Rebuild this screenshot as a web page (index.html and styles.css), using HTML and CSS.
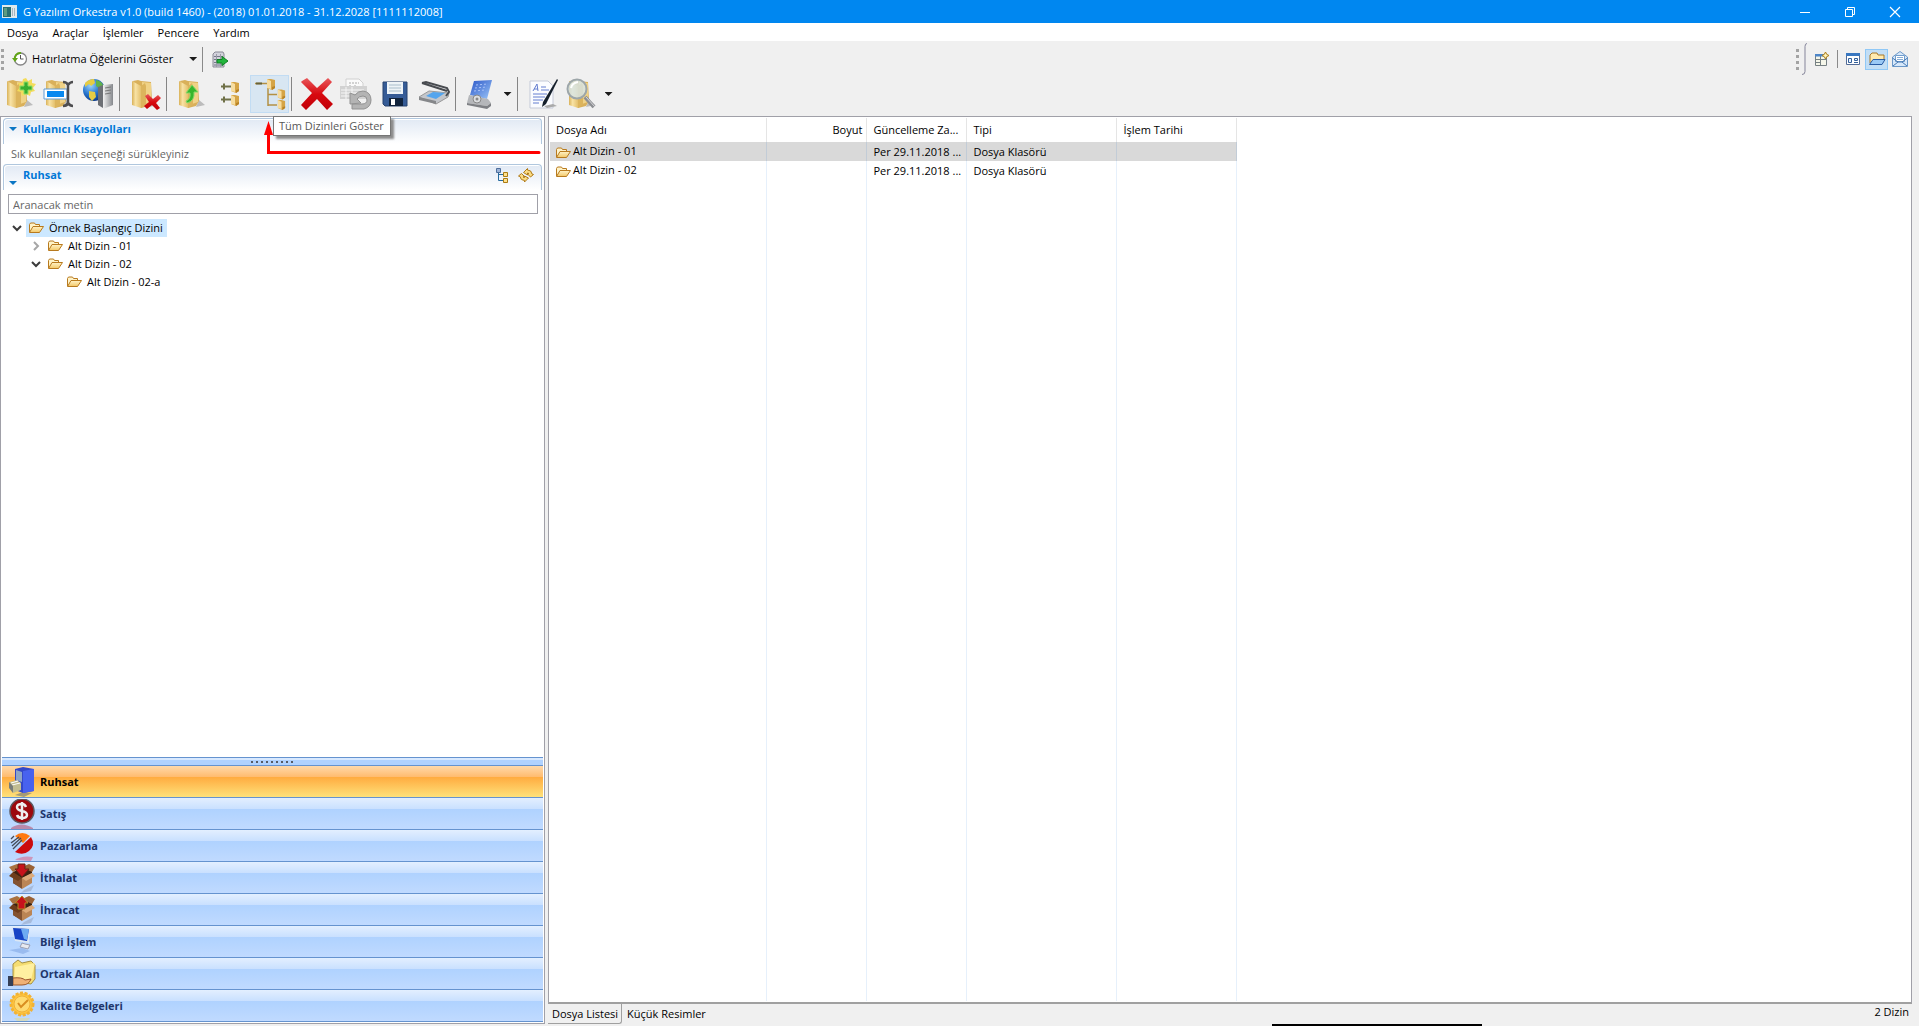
FILE: index.html
```html
<!DOCTYPE html>
<html lang="tr">
<head>
<meta charset="utf-8">
<title>G Yazılım Orkestra</title>
<link rel="stylesheet" href="styles.css">
</head>
<body>
<svg class="defs" aria-hidden="true">
  <defs>
    <linearGradient id="gFolder" x1="0" y1="0" x2="1" y2="0"><stop offset="0" stop-color="#d9b25a"/><stop offset=".4" stop-color="#f8e2a4"/><stop offset="1" stop-color="#e4c06c"/></linearGradient>
    <linearGradient id="gRed" x1="0" y1="0" x2="0" y2="1"><stop offset="0" stop-color="#e8585b"/><stop offset=".5" stop-color="#d80a10"/><stop offset="1" stop-color="#c00008"/></linearGradient>
    <linearGradient id="gBlue" x1="0" y1="0" x2="1" y2="1"><stop offset="0" stop-color="#2b57c8"/><stop offset="1" stop-color="#9cc6f8"/></linearGradient>
    <linearGradient id="gGrey" x1="0" y1="0" x2="1" y2="0"><stop offset="0" stop-color="#f2f2f2"/><stop offset="1" stop-color="#85888c"/></linearGradient>
    <linearGradient id="gSmall" x1="0" y1="0" x2="0" y2="1"><stop offset="0" stop-color="#fff3c8"/><stop offset="1" stop-color="#f3c867"/></linearGradient>
    <radialGradient id="gGlobe" cx=".35" cy=".3" r=".8"><stop offset="0" stop-color="#9ed4f8"/><stop offset=".5" stop-color="#2a78d0"/><stop offset="1" stop-color="#062c78"/></radialGradient>
    <symbol id="folder" viewBox="0 0 16 14">
      <path d="M1.500 11V3.500l1-1.500h4l1 1.500h4v2" fill="#fff3c8" stroke="#b87a1e"/>
      <path d="M1.500 11.500 5 5.500h10.500l-4 6z" fill="url(#gSmall)" stroke="#b87a1e"/>
    </symbol>
    <symbol id="bigfolder" viewBox="0 0 32 32">
      <path d="M20 29l9-2-6-5z" fill="#a5a5a5" opacity=".7"/>
      <path d="M4 3l5-1 3 1 10 1 1 19-3 5-8 2z" fill="#d9b05a"/>
      <path d="M13 4l9 1v19l-9 3z" fill="#f0d286"/>
      <path d="M3 3l9 5v22l-9-3z" fill="url(#gFolder)"/>
      <path d="M12 8l4-3 1 3v19l-5 3z" fill="#dcb45c"/>
    </symbol>
    <symbol id="minifolder" viewBox="0 0 10 12">
      <path d="M1 1h4l4 1v8L6 12 1 10z" fill="#d5a446"/><path d="M1 1l4 2v8l-4-1z" fill="#f7dda0"/><path d="M6 9l3-1v2l-3 2z" fill="#b98325"/>
    </symbol>
    <symbol id="box" viewBox="0 0 28 30">
      <path d="M16 27l10-5-3 6-10 2z" fill="#8c97b0" opacity=".45"/>
      <path d="M5 9l9-4 10 3v11l-10 6-9-5z" fill="#3c2212"/>
      <path d="M5 10l9 5v11l-9-6z" fill="#845331"/><path d="M14 15l10-5v10l-10 6z" fill="#bb8555"/>
      <path d="M5 9L1 4l8-3 5 3z" fill="#a9713f"/><path d="M14 4l7-3 6 3-3 5z" fill="#9a6236"/>
      <path d="M14 15l10-5 3 3-9 5z" fill="#dcaa7a"/><path d="M5 9l9 6-4 3-9-5z" fill="#6d3d1c"/>
    </symbol>
  </defs>
</svg>

<header class="titlebar">
  <svg width="15" height="13" viewBox="0 0 15 13"><path d="M0 0h15v13H0z" fill="#dfe9ec"/><path d="M1 2h8v10H1z" fill="#286f72"/><path d="M2 3h3v8H2z" fill="#5b9b83"/><path d="M10 3h1v8h-1zM12 3h1v8h-1z" fill="#a9b5bf"/></svg>
  <h1>G Yazılım Orkestra v1.0 (build 1460) - (2018) 01.01.2018 - 31.12.2028 [1111112008]</h1>
  <div class="window-buttons">
    <button aria-label="Simge durumuna küçült"><svg width="12" height="12"><path d="M1 6.500h10" stroke="#fff"/></svg></button>
    <button aria-label="Önceki boyut"><svg width="12" height="12"><path d="M1.500 3.500h7v7h-7zM3.500 3.500v-2h7v7h-2" fill="none" stroke="#fff"/></svg></button>
    <button aria-label="Kapat"><svg width="12" height="12"><path d="M1 1l10 10M11 1L1 11" stroke="#fff" stroke-width="1.200"/></svg></button>
  </div>
</header>
<nav class="menubar">
  <button>Dosya</button><button>Araçlar</button><button>İşlemler</button><button>Pencere</button><button>Yardım</button>
</nav>

<div class="toolbars">
  <div class="toolbar-top">
    <span class="grip"></span>
    <button class="reminder">
      <svg width="16" height="16" viewBox="0 0 16 16"><circle cx="8.500" cy="8" r="6" fill="#fff" stroke="#868686" stroke-width="1.300"/><path d="M8.500 4v4h3" fill="none" stroke="#555"/><path d="M3 9a5.500 5.500 0 0 1 6-7" fill="none" stroke="#61a516" stroke-width="2"/><path d="M0 7h6L3 11z" fill="#61a516"/></svg>
      Hatırlatma Öğelerini Göster
      <span class="caret"></span>
    </button>
    <span class="rule"></span>
    <button class="small-tool" aria-label="Çıkış"><svg width="17" height="17" viewBox="0 0 17 17"><path d="M3 1h8l1 2v13H1V3z" fill="#d3d3dc" stroke="#8a8a96"/><path d="M2 5.500h9M2 8.500h9M2 11.500h9M2 14h9" stroke="#77778a"/><path d="M4.500 3v13M8.500 3v13" stroke="#9a9aa8"/><path d="M5 8.500h5V5.500L16 10l-6 4.500V12H5z" fill="#22b53c" stroke="#118024"/></svg></button>
    <div class="perspectives">
      <span class="grip"></span>
      <svg class="curve" width="6" height="32" viewBox="0 0 6 32"><path d="M5 .500q-2 0-2 3v25q0 3-3 3" fill="none" stroke="#85859a"/></svg>
      <button aria-label="Perspektif aç"><svg width="16" height="16" viewBox="0 0 16 16"><path d="M1.500 3.500h11v11h-11zM1.500 8.500h11M6.500 5v9M1.500 11.500h5" fill="#f5f6e9" stroke="#768083"/><path d="M1 3h9v2.500H1z" fill="#4c85c8"/><path d="M11.500 1l1.200 2.300L15 4.500l-2.300 1.200L11.500 8l-1.200-2.300L8 4.500l2.300-1.200z" fill="#fff2b8" stroke="#ae7d18"/></svg></button>
      <span class="rule"></span>
      <button aria-label="Genel perspektif"><svg width="16" height="16" viewBox="0 0 16 16"><path d="M1.500 2.500h13v11h-13z" fill="#fff" stroke="#526b96"/><path d="M1 2h14v3H1z" fill="#3977c0"/><path d="M3.500 7.500h3v4h-3zM9.500 7.500h3v2h-3z" fill="#eaf3ff" stroke="#33609a"/><path d="M9 11.500h4" stroke="#33609a"/></svg></button>
      <button class="active" aria-label="Dosyalar"><svg width="18" height="16" viewBox="0 0 18 16"><path d="M2 12V4l2-2h5l1 2h6v4" fill="#ffeaae" stroke="#a97828"/><path d="M1.500 13.500 5 8.500h12l-3 5z" fill="#9ac9f5" stroke="#285ba3"/></svg></button>
      <button aria-label="Posta"><svg width="18" height="18" viewBox="0 0 18 18"><path d="M1.500 7 9 1.500 16.500 7v9.500h-15z" fill="#d7e8fa" stroke="#6b98c9"/><path d="M4.500 5.500h9v6h-9z" fill="#fff" stroke="#719dcc"/><path d="M6 7.500h6M6 9.500h6" stroke="#88add5"/><path d="M1.500 8 7 12h4l5.500-4M2 16l5-4M16 16l-5-4" fill="none" stroke="#4779b3"/></svg></button>
    </div>
  </div>

  <div class="toolbar-main">
    <button class="tool" aria-label="Yeni dizin"><svg viewBox="0 0 32 32"><use href="#bigfolder"/><path d="M22 0l2 3 4-2v4l4 1-3 4 2 3-4 1-1 4-4-2-4 2-1-4-4-1 3-4-2-4 4 0 1-4z" fill="#f4dc5b"/><path d="M20 4h4v4h4v4h-4v4h-4v-4h-4V8h4z" fill="#39ae30" stroke="#8fdc66"/></svg></button>
    <button class="tool" aria-label="Yeniden adlandır"><svg viewBox="0 0 32 32"><use href="#bigfolder"/><path d="M1 11h23v10H1z" fill="#fff" stroke="#619bd5"/><path d="M4 13h17v6H4z" fill="#0788ef"/><path d="M20 4q4 0 5 3 2-3 5-3M25 7v19M20 28q4 0 5-3 2 3 5 3" fill="none" stroke="#4e4e50" stroke-width="2.500"/></svg></button>
    <button class="tool" aria-label="Sunucu"><svg viewBox="0 0 32 32"><circle cx="12" cy="12" r="11" fill="url(#gGlobe)"/><path d="M3 5q4-4 9-4l1 4-4 3-2-2-4 3zM7 13l6 1 1 5-4 4-3-4z" fill="#e6cc43"/><path d="M14 2q6 1 8 7l-4 2-4-3z" fill="#61b34b"/><path d="M16 9l5-2v23l-5-3z" fill="#6d7075"/><path d="M21 7l10-1v21l-10 4z" fill="url(#gGrey)"/><path d="M23 10l6-1M23 13l6-1M23 16l6-1" stroke="#777"/></svg></button>
    <span class="sep"></span>
    <button class="tool" aria-label="Dizini sil"><svg viewBox="0 0 32 32"><use href="#bigfolder"/><path d="M16 18l3-2 5 5 5-4 3 3-5 5 4 5-3 2-5-5-5 4-3-3 5-4z" fill="url(#gRed)"/></svg></button>
    <span class="sep"></span>
    <button class="tool" aria-label="Üst dizin"><svg viewBox="0 0 32 32"><use href="#bigfolder"/><path d="M11 25q8-2 7-11h4L16 7l-6 8h4q1 6-4 8z" fill="#37b62d" stroke="#86d968"/></svg></button>
    <button class="tool" aria-label="Dizinleri daralt"><svg viewBox="0 0 32 32"><path d="M6 8.500h11M6 21.500h11M9 5.500v6M9 18.500v6" stroke="#6f7047" stroke-width="2"/><use href="#minifolder" x="15" y="3" width="10" height="12"/><use href="#minifolder" x="15" y="16" width="10" height="12"/></svg></button>
    <div class="tool-wrap">
      <button class="tool hot" aria-label="Tüm Dizinleri Göster" aria-describedby="tip"><svg viewBox="0 0 32 32"><path d="M1 5.500h14M14 6v22M14 16.500h9M14 27h9" fill="none" stroke="#b39145" stroke-width="1.500"/><path d="M2 5.500h6" stroke="#666238" stroke-width="2"/><use href="#minifolder" x="12" y="0" width="10" height="12"/><use href="#minifolder" x="23" y="10" width="9" height="12"/><use href="#minifolder" x="23" y="21" width="9" height="11"/></svg></button>
      <svg class="arrow" viewBox="0 0 280 36"><path d="M5.500 12v19.500H276" fill="none" stroke="#f00" stroke-width="3" stroke-linecap="round"/><path d="M5.500 0 10 14H1z" fill="#f00"/></svg>
      <span class="tooltip" id="tip" role="tooltip">Tüm Dizinleri Göster</span>
    </div>
    <span class="sep"></span>
    <button class="tool" aria-label="Sil"><svg viewBox="0 0 32 32"><path d="M1 3l5-3 10 10L27 0l4 4-10 11 11 11-6 6-10-11L5 32l-5-5 11-12L0 4z" fill="url(#gRed)"/></svg></button>
    <button class="tool" aria-label="Geri al"><svg viewBox="0 0 32 32"><path d="M6 1h13l4 4v8H6z" fill="#fafafa" stroke="#d0d0d0"/><path d="M9 5h10M9 8h3m2 0h3" stroke="#aaa" stroke-dasharray="2 1"/><path d="M0 8h27v13H0z" fill="#d2d2d2"/><path d="M1 12h23M1 15h20M1 18h18M6 9v12M12 9v12" stroke="#f6f6f6"/><path d="M12 31h12q7-2 7-9 0-8-8-9-5 0-8 4l-5-2v11l11-1-4-4q2-3 6-3 4 0 4 4 0 4-5 4H12z" fill="#b4b4b4" stroke="#929292"/></svg></button>
    <button class="tool" aria-label="Kaydet"><svg viewBox="0 0 32 32"><path d="M4 4h24v24H6l-2-2z" fill="#355b96" stroke="#27436e"/><path d="M8 4h16v12H8z" fill="#edf3f7"/><path d="M10 7h12M10 10h12M10 13h12" stroke="#a9bdcb"/><path d="M10 20h14v8H10z" fill="#10233c"/><path d="M12 21h4v6h-4z" fill="#fff"/></svg></button>
    <button class="tool" aria-label="Tara"><svg viewBox="0 0 32 32"><path d="M1 19l10-6 20 2-1 4-12 7z" fill="#c3c6cb" stroke="#999"/><path d="M8 18l7-4 12 1-9 6z" fill="#54a5ee"/><path d="M1 19l17 4v3L1 22z" fill="#85878a"/><path d="M4 5l25 8M4 5l4-1 21 6 2 4-3 4" fill="none" stroke="#484b50" stroke-width="2"/></svg></button>
    <span class="sep"></span>
    <button class="tool" aria-label="Aygıt"><svg viewBox="0 0 32 32"><path d="M9 3l18-1-5 19-17-4z" fill="url(#gBlue)"/><path d="M11 7l12-1M10 10l12-1M9 13l11-1" stroke="#a8c2f8" stroke-dasharray="2 2"/><path d="M4 17l19 4 3 4-4 3-20-3z" fill="#b5b7ba"/><path d="M2 25l20 3 4-3v3l-4 3-20-4z" fill="#7e8084"/><circle cx="12" cy="21" r="4" fill="#dcdee0" stroke="#888"/><circle cx="12" cy="21" r="1.500" fill="#888"/></svg></button>
    <button class="drop" aria-label="Aygıt seçenekleri"><span class="caret"></span></button>
    <span class="sep"></span>
    <button class="tool" aria-label="Belge düzenle"><svg viewBox="0 0 32 32"><path d="M3 3h18l5 5v22H3z" fill="#fbfcff" stroke="#c5cad8"/><path d="M6 13l4-7 1 7M7 11h4M14 9h5M14 12h8M6 16h14M6 19h12M6 22h10M6 25h6" fill="none" stroke="#647ed0"/><path d="M17 28l9-2 4 2-10 2z" fill="#aaa"/><path d="M30 1l1 1-12 24-4 3 1-5z" fill="#16202c"/></svg></button>
    <button class="tool" aria-label="Ara"><svg viewBox="0 0 32 32"><use href="#bigfolder"/><path d="M19 19l9 10" stroke="#8d8f93" stroke-width="4"/><path d="M20 19l9 10" stroke="#d9d9db"/><circle cx="11" cy="11" r="9.500" fill="#d7e6ea" fill-opacity=".8" stroke="#9da6a9" stroke-width="2"/><path d="M5 10q1-5 7-6" fill="none" stroke="#fff" stroke-width="2"/></svg></button>
    <button class="drop" aria-label="Arama seçenekleri"><span class="caret"></span></button>
  </div>
</div>

<main class="workspace">
  <aside class="sidebar">
    <section class="section">
      <div class="section-head"><span class="twisty"></span><h2>Kullanıcı Kısayolları</h2></div>
      <p class="hint">Sık kullanılan seçeneği sürükleyiniz</p>
    </section>
    <section class="section grow">
      <div class="section-head">
        <span class="twisty low"></span><h2>Ruhsat</h2>
        <div class="section-tools">
          <button aria-label="Ağaç görünümü"><svg width="14" height="16" viewBox="0 0 14 16"><path d="M3.500 5v8.500H8M3.500 7.500H8" fill="none" stroke="#276b9e"/><path d="M1.500 1.500h4v4h-4z" fill="#9cb3d6" stroke="#4e6f9c"/><path d="M8.500 5.500h4v4h-4zM8.500 11.500h4v4h-4z" fill="#ffe18d" stroke="#ab7b12"/></svg></button>
          <button aria-label="Yenile"><svg width="16" height="16" viewBox="0 0 16 16"><path d="M5.500 5.500l4-4V3q4 0 4.500 4l1.500.500-3 2.500-3-3L11 6.500 9.500 6v2z" fill="#f9dc84" stroke="#b07a17"/><path d="M10.500 11l-4 4v-1.500q-4 0-4.500-4L.500 9l3-2.500 3 3-1.500.500 1.500.500V9z" fill="#f9dc84" stroke="#b07a17"/></svg></button>
        </div>
      </div>
      <input class="search" type="text" placeholder="Aranacak metin" aria-label="Aranacak metin">
      <ul class="tree">
        <li><svg class="chev" viewBox="0 0 10 10"><path d="M1 3l4 4 4-4"/></svg><span class="node selected"><svg><use href="#folder"/></svg>Örnek Başlangıç Dizini</span>
          <ul>
            <li><svg class="chev closed" viewBox="0 0 10 10"><path d="M3 1l4 4-4 4"/></svg><span class="node"><svg><use href="#folder"/></svg>Alt Dizin - 01</span></li>
            <li><svg class="chev" viewBox="0 0 10 10"><path d="M1 3l4 4 4-4"/></svg><span class="node"><svg><use href="#folder"/></svg>Alt Dizin - 02</span>
              <ul><li><span class="chev"></span><span class="node"><svg><use href="#folder"/></svg>Alt Dizin - 02-a</span></li></ul>
            </li>
          </ul>
        </li>
      </ul>
    </section>
    <nav class="modules">
      <div class="splitter"><span class="dots"></span></div>
      <button class="current"><svg viewBox="0 0 28 30"><path d="M7 28l8-3 9 1-8 4z" fill="#4c5c78" opacity=".5"/><path d="M7 2l8-2 11 2v22l-11 2-8-3z" fill="#3448c8"/><path d="M15 4l11-2v22l-11 2z" fill="#4862ee"/><path d="M8 3l6 2v10l-6-2z" fill="#8ea5c6"/><path d="M1 15l8-2 4 3v7l-8 3z" fill="#c1bd92"/><path d="M3 16l7-2M4 18l8-2" stroke="#fff"/><path d="M1 15l4 4v7l-4-5z" fill="#787d79"/></svg>Ruhsat</button>
      <button><svg viewBox="0 0 28 30"><path d="M3 29q10-7 22 0v1H3z" fill="#b43a57" opacity=".5"/><circle cx="14" cy="12" r="12" fill="#9c080d" stroke="#5c5860" stroke-width="1.500"/><path d="M18 8q-1-3-4-3-5 0-5 3 0 3 5 4 5 1 5 4t-5 3q-4 0-5-3M14 3v18" fill="none" stroke="#eee" stroke-width="2.500"/></svg>Satış</button>
      <button><svg viewBox="0 0 28 30"><path d="M7 29q7-5 18-3l-2 4z" fill="#dc5475" opacity=".5"/><path d="M7 5q7-6 15 0l-7 7z" fill="#ff7910"/><path d="M23 6q5 8-2 14-6 5-14 1z" fill="#cb0a0d"/><path d="M3 8l3-3M3 12l8-6M4 15l9-8M5 18l9-9" stroke="#444b58" stroke-width="1.300"/></svg>Pazarlama</button>
      <button><svg viewBox="0 0 28 30"><use href="#box"/><path d="M10 1h7v5h4l-7 8-7-8h3z" fill="#c7131c" stroke="#652312"/></svg>İthalat</button>
      <button><svg viewBox="0 0 28 30"><use href="#box"/><path d="M14 1l6 7h-3v6h-7V8H7z" fill="#c7131c" stroke="#b68b24"/></svg>İhracat</button>
      <button><svg viewBox="0 0 28 30"><path d="M1 23l13-2 8 3-7 3z" fill="#6690d8" opacity=".4"/><path d="M4 0l18 1-1 15-14-2z" fill="#dce7f3"/><path d="M5 1l16 1-2 12-12-2z" fill="#1744c6"/><path d="M13 2l8 0-2 11-3-1z" fill="#6eabf2"/><path d="M14 16l3 1 5 1-2 4-8-2z" fill="#e7e9ef" stroke="#9a9eb2"/></svg>Bilgi İşlem</button>
      <button><svg viewBox="0 0 28 30"><path d="M5 5l5-4 4 3 9-2 4 4v14l-4 5-18-3z" fill="#f5dd72" stroke="#a59045"/><path d="M7 8l20-4-4 17-17 3z" fill="#fff0a0"/><path d="M5 19q9-1 12 2l6-1q-2 6-9 6H5z" fill="#efb177" stroke="#9c562b"/><path d="M0 17h5v10H0z" fill="#364057"/></svg>Ortak Alan</button>
      <button><svg viewBox="0 0 28 30"><path d="M6 27h16l-3 3H9z" fill="#ddd899" opacity=".6"/><circle cx="14" cy="13" r="11" fill="#ffc63e" stroke="#f2b235" stroke-width="3" stroke-dasharray="3 1.500"/><circle cx="14" cy="13" r="8" fill="#ffda70" stroke="#eeb13b"/><path d="M10 12l3 4 7-7" fill="none" stroke="#d98d20" stroke-width="2"/></svg>Kalite Belgeleri</button>
    </nav>
  </aside>

  <section class="content">
    <div class="list">
      <table>
        <colgroup><col class="c-name"><col class="c-size"><col class="c-date"><col class="c-type"><col class="c-work"></colgroup>
        <thead><tr><th>Dosya Adı</th><th class="num">Boyut</th><th>Güncelleme Za...</th><th>Tipi</th><th>İşlem Tarihi</th></tr></thead>
        <tbody>
          <tr class="selected"><td class="name"><svg><use href="#folder"/></svg>Alt Dizin - 01</td><td></td><td>Per 29.11.2018 ...</td><td>Dosya Klasörü</td><td></td></tr>
          <tr><td class="name"><svg><use href="#folder"/></svg>Alt Dizin - 02</td><td></td><td>Per 29.11.2018 ...</td><td>Dosya Klasörü</td><td></td></tr>
          <tr class="filler"><td></td><td></td><td></td><td></td><td></td></tr>
        </tbody>
      </table>
    </div>
    <div class="tabs">
      <button class="tab current">Dosya Listesi</button><button class="tab">Küçük Resimler</button>
      <span class="count">2 Dizin</span>
    </div>
  </section>
</main>
<footer class="edge"><span></span></footer>
</body>
</html>
```
FILE: styles.css
```css
* { box-sizing: border-box; }

body {
  margin: 0;
  height: 100vh;
  display: flex;
  flex-direction: column;
  overflow: hidden;
  background: #f0f0f0;
  color: #000;
  font: 11px/16px "Open Sans", "Noto Sans", sans-serif;
}

button {
  margin: 0;
  padding: 0;
  border: 0;
  background: none;
  color: inherit;
  font: inherit;
  white-space: nowrap;
}

svg { display: block; flex: none; }
h1, h2, p, ul { margin: 0; padding: 0; font-size: 11px; }
ul { list-style: none; }
.defs { position: absolute; width: 0; height: 0; }

/* Title bar and menu */
.titlebar {
  display: flex;
  align-items: center;
  gap: 6px;
  height: 23px;
  padding: 0 2px;
  background: #0087f0;
  color: #fff;
  flex: none;
}
.titlebar h1 { font-weight: 400; }
.window-buttons { display: flex; margin-left: auto; }
.window-buttons button { width: 45px; height: 20px; display: grid; place-items: center; }

.menubar {
  display: flex;
  gap: 14px;
  height: 18px;
  padding: 1px 0 0 7px;
  background: #fff;
  flex: none;
}

/* Toolbars */
.toolbars { height: 75px; flex: none; }
.toolbar-top { display: flex; align-items: center; height: 34px; padding-top: 2px; }
.grip { width: 3px; height: 21px; background: repeating-linear-gradient(#a3a3a3 0 3px, transparent 3px 6px); }
.toolbar-top > .grip { margin-left: 1px; }
.reminder { display: flex; align-items: center; gap: 4px; margin-left: 8px; }
.reminder .caret { margin-left: 12px; }
.caret { width: 8px; height: 4px; background: #1a1a1a; clip-path: polygon(0 0, 100% 0, 50% 100%); }
.rule { width: 1px; height: 25px; margin: 0 9px 0 5px; background: #8a8a8a; }
.perspectives { display: flex; align-items: center; margin-left: auto; margin-right: 10px; }
.perspectives .curve { margin: 0 5px 0 3px; }
.perspectives .rule { height: 18px; margin: 0 6px; }
.perspectives button { display: grid; place-items: center; height: 21px; min-width: 18px; }
.perspectives button.active { width: 23px; margin: 0 3px; border: 1px solid #90c8f6; background: #c2def5; }

.toolbar-main { display: flex; align-items: center; height: 38px; }
.tool { width: 39px; height: 38px; display: grid; place-items: center; }
.tool svg { width: 32px; height: 32px; }
.tool.hot { border: 1px solid #c2dcf3; background: #d8e6f2; }
.sep { width: 1px; height: 34px; margin: 0 5px 0 2px; background: #858585; }
.drop { width: 15px; height: 38px; display: grid; place-items: center; }
.tool-wrap { position: relative; z-index: 2; }
.arrow { position: absolute; left: 13px; top: 46px; width: 280px; height: 36px; pointer-events: none; }
.tooltip {
  position: absolute;
  left: 23px;
  top: 41px;
  padding: 1px 6px 1px 5px;
  border: 1px solid #767676;
  background: #fff;
  box-shadow: 3px 3px 2px #8c8c8c;
  color: #575757;
  white-space: nowrap;
}

/* Work area */
.workspace { display: flex; gap: 3px; flex: 1; min-height: 0; padding-right: 7px; }
.sidebar {
  width: 28.5%;
  display: flex;
  flex-direction: column;
  padding: 1px;
  border: 1px solid #a0a0a8;
  background: #fff;
}
.section { padding: 0 1px; }
.section.grow { flex: 1; }
.section-head {
  display: flex;
  align-items: center;
  height: 26px;
  padding: 0 7px 5px 5px;
  border: 1px solid #b0c7de;
  border-width: 1px 1px 0;
  border-radius: 4px 4px 0 0;
  background: linear-gradient(#e1e9f4, #fff);
  box-shadow: inset 1px 1px #fff;
  color: #0078d7;
}
.section-head h2 { font-weight: 700; margin-left: 6px; }
.twisty { width: 8px; height: 4px; background: #0b76c4; clip-path: polygon(0 0, 100% 0, 50% 100%); }
.twisty.low { align-self: flex-end; }
.section-tools { display: flex; gap: 9px; margin-left: auto; }
.hint { padding: 2px 8px; color: #666; }
.search {
  display: block;
  width: calc(100% - 9px);
  height: 20px;
  margin: 4px 4px 5px 5px;
  padding: 0 4px;
  border: 1px solid #a0a0a8;
  background: #fff;
  font: inherit;
}
.search::placeholder { color: #666; opacity: 1; }
.tree { padding-left: 9px; }
.tree ul { padding-left: 19px; }
.tree li { white-space: nowrap; line-height: 18px; }
.chev { display: inline-block; vertical-align: top; width: 10px; height: 10px; margin: 4px 4px 0 0; fill: none; stroke: #3b3b3b; stroke-width: 2; }
.chev.closed { stroke: #a6a6a6; }
.node { display: inline-flex; align-items: center; gap: 5px; height: 18px; padding: 0 4px 0 2px; vertical-align: top; }
.node svg, .name svg { width: 16px; height: 14px; }
.node.selected { background: #cce8ff; }

/* Module buttons */
.modules { display: flex; flex-direction: column; border-bottom: 1px solid #6593cf; }
.splitter { display: grid; place-items: center; height: 8px; border-top: 1px solid #6593cf; background: linear-gradient(#d8e9ff 0 2px, #b0d2ff 2px); }
.dots { width: 43px; height: 2px; background: repeating-linear-gradient(90deg, #555b66 0 2px, transparent 2px 5px); }
.modules button {
  display: flex;
  align-items: center;
  gap: 4px;
  height: 32px;
  padding-left: 6px;
  border-top: 1px solid #6593cf;
  background: linear-gradient(#e3efff 0, #c9e0ff 11px, #afd2ff 11px, #c0daff);
  color: #20356b;
  font-weight: 700;
  text-align: left;
}
.modules button.current { background: linear-gradient(#ffd9aa 0, #ffbb6e 11px, #ffab3f 11px, #fee17a); color: #000; }
.modules svg { width: 28px; height: 30px; }

/* File list */
.content { flex: 1; min-width: 0; display: flex; flex-direction: column; }
.list { flex: 1; min-height: 0; padding: 1px; border: 1px solid #a0a0a8; border-bottom: 2px solid #a0a0a0; background: #fff; }
table { width: 687px; height: 100%; table-layout: fixed; border-collapse: collapse; }
.c-name { width: 217px; }
.c-size, .c-date { width: 100px; }
.c-type { width: 150px; }
.c-work { width: 120px; }
th, td { padding: 0 4px 0 6px; border-right: 1px solid #e6f0fb; white-space: nowrap; text-align: left; font-weight: 400; }
th { height: 24px; border-color: #e5e5e5; }
th.num { text-align: right; }
td { height: 19px; }
.filler td { height: auto; }
tr.selected { background: #d9d9d9; }
tr.selected td { border-color: #c2ccd7; }
td.name { padding-left: 5px; }
.name svg { display: inline-block; vertical-align: middle; margin-right: 2px; }

.tabs { display: flex; height: 20px; flex: none; }
.tab { padding: 0 5px; }
.tab.current { padding: 0 3px 0 4px; border-right: 1px solid #a0a0a0; border-bottom: 1px solid #a0a0a0; border-radius: 0 0 3px 0; }
.count { margin-left: auto; padding-right: 3px; }

.edge { height: 2px; flex: none; padding-left: 66.3%; }
.edge span { display: block; width: 210px; height: 2px; background: #000; }
```
